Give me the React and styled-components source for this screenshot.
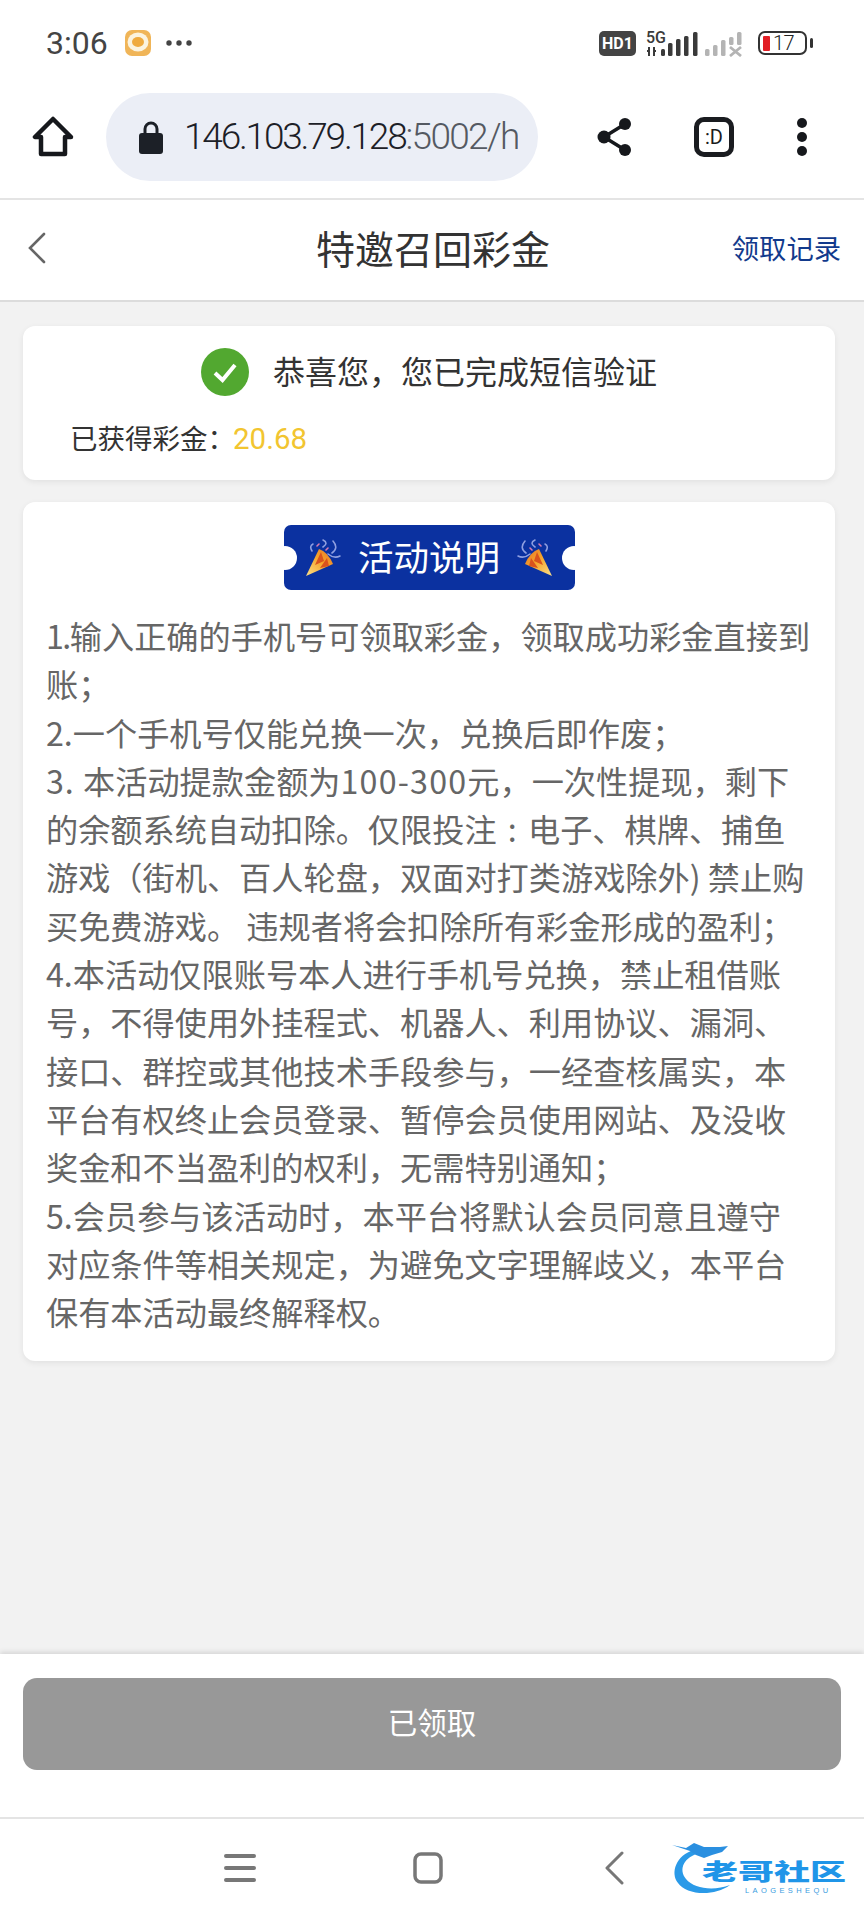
import React from "react";
import styled, { createGlobalStyle } from "styled-components";

const Global = createGlobalStyle`
  html, body { margin: 0; padding: 0; background: #fff; }
  * { box-sizing: border-box; }
`;
const CJK = `"Noto Sans CJK SC", "Noto Sans", sans-serif`;

const Page = styled.div`
  width: 864px; height: 1920px; display: flex; flex-direction: column;
  font-family: ${CJK}; background: #f2f2f2; overflow: hidden;
`;
const StatusBar = styled.div`
  height: 85px; flex: none; background: #fff; display: flex; align-items: flex-start;
  justify-content: space-between; padding: 29px 51px 0 46px;
`;
const StatusLeft = styled.div`display: flex; align-items: center; gap: 16px; height: 28px;`;
const Time = styled.span`
  font-family: Roboto, sans-serif; font-size: 32px; color: #444; line-height: 28px;
`;
const Dots = styled.svg`margin-left: -2px;`;
const StatusRight = styled.div`display: flex; align-items: center; height: 28px;`;
const HdBadge = styled.span`
  width: 37px; height: 25px; background: #444; border-radius: 5px; color: #fff;
  font: 700 16px/25px Roboto, sans-serif; text-align: center; margin-right: 10px;
`;
const Battery = styled.div`
  margin-left: 15px; width: 49px; height: 24px; border: 2.5px solid #333; border-radius: 7px;
  display: flex; align-items: center; padding-left: 3px; gap: 3px;
  font: 300 20px/1 Roboto, sans-serif; letter-spacing: -0.5px; color: #222;
`;
const BatteryFill = styled.span`width: 7px; height: 15px; background: #e21f26; border-radius: 1px;`;
const BatteryCap = styled.span`width: 3px; height: 10px; margin-left: 3px; background: #333; border-radius: 2px;`;

const BrowserBar = styled.div`
  height: 115px; flex: none; background: #fff; border-bottom: 2px solid #e4e4e4;
  display: flex; align-items: flex-start; padding: 8px 0 0 32px;
`;
const HomeSlot = styled.div`width: 42px; height: 48px; margin-top: 23px; margin-right: 32px;`;
const UrlPill = styled.div`
  width: 432px; height: 88px; border-radius: 44px; background: #ebeef6;
  display: flex; align-items: center; padding: 0 18px 0 32px; overflow: hidden;
`;
const UrlText = styled.div`
  margin-left: 20px; width: 334px; overflow: hidden; white-space: nowrap;
  font: 300 37px/44px Roboto, sans-serif; letter-spacing: -2.2px; color: #1c2027;
  & > span { color: #545962; letter-spacing: -1.700px; }
`;
const ToolIcon = styled.div`margin-top: 24px; margin-left: ${p => p.$gap}px; height: 44px; display: flex;`;
const TabCount = styled.div`
  width: 40px; height: 40px; border: 5px solid #1a1c20; border-radius: 10px;
  font: 400 20px/30px Roboto, sans-serif; text-align: center; color: #1a1c20;
`;

const Header = styled.div`
  height: 102px; flex: none; background: #fff; border-bottom: 2px solid #dcdcdc;
  position: relative; display: flex; align-items: center; justify-content: space-between; padding: 0 23px 4px 26px;
`;
const Title = styled.h1`
  margin: 0; padding-bottom: 3px; position: absolute; left: 316px; font-weight: 400; font-size: 39px; line-height: 50px; color: #333;
`;
const RecordLink = styled.a`padding-bottom: 2px; font-size: 27.3px; line-height: 40px; color: #123a8c;`;

const Main = styled.main`
  flex: 1; min-height: 0; padding: 24px 29px 0 23px; display: flex; flex-direction: column; gap: 22px;
`;
const Card = styled.section`
  background: #fff; border-radius: 12px; box-shadow: 0 2px 6px rgba(0,0,0,.07);
`;
const SuccessCard = styled(Card)`height: 154px; padding-top: 22px;`;
const SuccessRow = styled.div`height: 48px; display: flex; align-items: center; justify-content: center; gap: 24px;`;
const SuccessText = styled.span`padding-bottom: 5px; font-size: 32px; line-height: 48px; color: #333;`;
const BonusRow = styled.div`margin-top: 21px; padding-left: 47px; font-size: 27.500px; line-height: 40px; color: #333;`;
const BonusValue = styled.span`color: #f2c530; font-family: Roboto, sans-serif; font-size: 29.500px; margin-left: -2px;`;
const InfoCard = styled(Card)`height: 859px; padding: 23px 24px 0 23px;`;
const BadgeWrap = styled.div`display: flex; justify-content: center; padding-left: 1px;`;
const Badge = styled.div`
  width: 291px; height: 65px; background: #0b31a0; border-radius: 7px; position: relative;
  display: flex; align-items: center; justify-content: center; gap: 16px;
  color: #fff; font-size: 35.500px; line-height: 65px;
  &::before, &::after {
    content: ""; position: absolute; top: 21px; width: 24px; height: 24px; border-radius: 50%; background: #fff;
  }
  &::before { left: -11px; }
  &::after { right: -11px; }
`;
const BadgeLabel = styled.span`padding-bottom: 3px; line-height: 60px;`;
const Rules = styled.div`margin-top: 21px;`;
const Rule = styled.p`margin: 0; font-size: 32.2px; line-height: 48.3px; color: #666;`;
const RuleIndex = styled.span`letter-spacing: ${p => p.$spacing}px;`;
const Amount = styled.span`letter-spacing: 1.200px;`;
const Colon = styled.span`margin: 0 4px;`;

const Footer = styled.div`
  height: 163px; flex: none; background: #fff; box-shadow: 0 -2px 5px rgba(0,0,0,.12);
  padding: 24px 23px 0; position: relative;
`;
const ClaimButton = styled.button`
  width: 818px; height: 92px; border: 0; border-radius: 14px; background: #989898; color: #fff;
  font-family: ${CJK}; font-size: 29.500px; display: block; padding: 0 0 6px;
`;
const NavBar = styled.nav`
  height: 103px; flex: none; background: #fff; border-top: 2px solid #e4e4e4; position: relative;
  display: flex; align-items: center; padding: 0 0 3px 224px;
`;
const NavSlot = styled.div`display: flex; margin-right: ${p => p.$gap}px;`;
const Logo = styled.div`
  position: absolute; left: 668px; top: 22px; width: 196px; height: 64px;
`;
const LogoName = styled.span`
  position: absolute; left: 34px; top: 9px; font-weight: 900; font-size: 36px; line-height: 40px;
  color: #1f95e8; white-space: nowrap; transform: scaleY(.62);
`;
const LogoSub = styled.span`
  position: absolute; left: 77px; top: 45px; font: 400 7.500px/9px "Liberation Sans", sans-serif;
  color: #3a9ce0; letter-spacing: 3.4px; white-space: nowrap;
`;

const Hat = ({ flip, id }) => (
  <svg width="36" height="38" viewBox="0 0 36 38" style={flip ? { transform: "scaleX(-1)" } : undefined}>
    <defs>
      <linearGradient id={id} x1="0" y1="1" x2="1" y2="0">
        <stop offset="0" stopColor="#fbe08a" />
        <stop offset=".55" stopColor="#f5a42a" />
        <stop offset="1" stopColor="#e8742a" />
      </linearGradient>
    </defs>
    <path d="M0 37 L13 10 Q22 13 27 25 Z" fill={`url(#${id})`} />
    <path d="M9 26 L15 13 L18 22 Z M14 29 L21 19 L23 27 Z" fill="#d9531e" />
    <path d="M6 12 Q3 7 7 5 M17 1 Q23 4 17 8 M27 2 Q33 9 26 14 M22 15 Q28 20 34 17" fill="none" stroke="#8f9fe0" strokeWidth="1.600" strokeLinecap="round" />
    <path d="M11 7 L13 5 M20 11 L22 9" stroke="#d77ab0" strokeWidth="1.600" strokeLinecap="round" />
  </svg>
);

export default function App() {
  return (
    <Page>
      <Global />
      <StatusBar>
        <StatusLeft>
          <Time>3:06</Time>
          <svg width="28" height="28" viewBox="0 0 28 28">
            <rect x="1" y="1" width="26" height="26" rx="7" fill="#f0b558" />
            <ellipse cx="14" cy="13" rx="10.500" ry="9.500" fill="#fbf3df" />
            <ellipse cx="14" cy="13" rx="6" ry="5" fill="#efaa3e" />
          </svg>
          <Dots width="26" height="8" viewBox="0 0 26 8">
            <circle cx="3" cy="4" r="2.700" fill="#444" /><circle cx="13" cy="4" r="2.700" fill="#444" /><circle cx="23" cy="4" r="2.700" fill="#444" />
          </Dots>
        </StatusLeft>
        <StatusRight>
          <HdBadge>HD1</HdBadge>
          <svg width="97" height="28" viewBox="0 0 97 28">
            <text x="0" y="14" fontFamily="Roboto, sans-serif" fontWeight="500" fontSize="16" fill="#3a3a3a">5G</text>
            <path d="M3 18v9M8 18v9M1 22h2M8 22h2" stroke="#3a3a3a" strokeWidth="2" fill="none" />
            <rect x="15" y="20" width="4" height="7" rx="1.500" fill="#3a3a3a" />
            <rect x="22" y="14" width="4.500" height="13" rx="1.500" fill="#3a3a3a" />
            <rect x="30" y="10" width="4.500" height="17" rx="1.500" fill="#3a3a3a" />
            <rect x="38" y="7" width="4.500" height="20" rx="1.500" fill="#3a3a3a" />
            <rect x="47" y="3" width="4.500" height="24" rx="1.500" fill="#3a3a3a" />
            <rect x="59" y="20" width="4.500" height="7" rx="1.500" fill="#b4b4b4" />
            <rect x="67" y="16" width="4.500" height="11" rx="1.500" fill="#b4b4b4" />
            <rect x="75" y="11" width="4.500" height="16" rx="1.500" fill="#b4b4b4" />
            <rect x="83" y="8" width="4.500" height="8" rx="1.500" fill="#b4b4b4" />
            <rect x="91" y="3" width="4.500" height="13" rx="1.500" fill="#b4b4b4" />
            <path d="M84 18l11 9M95 18l-11 9" stroke="#b4b4b4" strokeWidth="2.800" />
          </svg>
          <Battery>
            <BatteryFill />17
          </Battery>
          <BatteryCap />
        </StatusRight>
      </StatusBar>

      <BrowserBar>
        <HomeSlot>
          <svg width="42" height="42" viewBox="0 0 42 42">
            <path d="M21 3 L3 21 L9 21 L9 38 L33 38 L33 21 L39 21 Z" fill="none" stroke="#16181c" strokeWidth="4.500" strokeLinejoin="round" />
          </svg>
        </HomeSlot>
        <UrlPill>
          <svg width="26" height="34" viewBox="0 0 26 34">
            <path d="M7 15V9a6 6 0 0 1 12 0v6" fill="none" stroke="#1c2027" strokeWidth="3" />
            <rect x="1" y="13" width="24" height="21" rx="3" fill="#1c2027" />
          </svg>
          <UrlText>146.103.79.128<span>:5002/h</span></UrlText>
        </UrlPill>
        <ToolIcon $gap={59}>
          <svg width="36" height="40" viewBox="0 0 36 40">
            <path d="M28 7 L7 20 L28 33" fill="none" stroke="#16181c" strokeWidth="3.500" />
            <circle cx="28" cy="7" r="6" fill="#16181c" /><circle cx="7" cy="20" r="6.500" fill="#16181c" /><circle cx="28" cy="33" r="6" fill="#16181c" />
          </svg>
        </ToolIcon>
        <ToolIcon $gap={61}><TabCount>:D</TabCount></ToolIcon>
        <ToolIcon $gap={62}>
          <svg width="12" height="40" viewBox="0 0 12 40">
            <circle cx="6" cy="6" r="5" fill="#16181c" /><circle cx="6" cy="20" r="5" fill="#16181c" /><circle cx="6" cy="34" r="5" fill="#16181c" />
          </svg>
        </ToolIcon>
      </BrowserBar>

      <Header>
        <svg width="22" height="32" viewBox="0 0 22 32">
          <path d="M18 2 L4 16 L18 30" fill="none" stroke="#666" strokeWidth="2.600" strokeLinecap="round" />
        </svg>
        <Title>特邀召回彩金</Title>
        <RecordLink>领取记录</RecordLink>
      </Header>

      <Main>
        <SuccessCard>
          <SuccessRow>
            <svg width="48" height="48" viewBox="0 0 48 48">
              <circle cx="24" cy="24" r="24" fill="#52a830" />
              <path d="M14 25 L21.500 32 L34 17" fill="none" stroke="#fff" strokeWidth="4" />
            </svg>
            <SuccessText>恭喜您，您已完成短信验证</SuccessText>
          </SuccessRow>
          <BonusRow>已获得彩金：<BonusValue>20.68</BonusValue></BonusRow>
        </SuccessCard>
        <InfoCard>
          <BadgeWrap>
            <Badge><Hat id="hatL" /><BadgeLabel>活动说明</BadgeLabel><Hat id="hatR" flip /></Badge>
          </BadgeWrap>
          <Rules>
            <Rule><RuleIndex $spacing={-1.5}>1.</RuleIndex>输入正确的手机号可领取彩金，领取成功彩金直接到账；</Rule>
            <Rule>2.一个手机号仅能兑换一次，兑换后即作废；</Rule>
            <Rule><RuleIndex $spacing={1}>3. </RuleIndex>本活动提款金额为<Amount>100-300</Amount>元，一次性提现，剩下的余额系统自动扣除。仅限投注<Colon> : </Colon>电子、棋牌、捕鱼游戏（街机、百人轮盘，双面对打类游戏除外) 禁止购买免费游戏。 违规者将会扣除所有彩金形成的盈利；</Rule>
            <Rule>4.本活动仅限账号本人进行手机号兑换，禁止租借账号，不得使用外挂程式、机器人、利用协议、漏洞、接口、群控或其他技术手段参与，一经查核属实，本平台有权终止会员登录、暂停会员使用网站、及没收奖金和不当盈利的权利，无需特别通知；</Rule>
            <Rule>5.会员参与该活动时，本平台将默认会员同意且遵守对应条件等相关规定，为避免文字理解歧义，本平台保有本活动最终解释权。</Rule>
          </Rules>
        </InfoCard>
      </Main>

      <Footer><ClaimButton>已领取</ClaimButton></Footer>

      <NavBar>
        <NavSlot $gap={156}>
          <svg width="32" height="32" viewBox="0 0 32 32">
            <path d="M2 4h28M2 16h28M2 28h28" stroke="#777" strokeWidth="4" strokeLinecap="round" />
          </svg>
        </NavSlot>
        <NavSlot $gap={159}>
          <svg width="32" height="34" viewBox="0 0 32 34">
            <rect x="3" y="3" width="26" height="28" rx="6" fill="none" stroke="#777" strokeWidth="3.500" />
          </svg>
        </NavSlot>
        <NavSlot $gap={0}>
          <svg width="22" height="34" viewBox="0 0 22 34">
            <path d="M19 2 L4 17 L19 32" fill="none" stroke="#777" strokeWidth="3" strokeLinecap="round" strokeLinejoin="round" />
          </svg>
        </NavSlot>
        <Logo>
          <svg width="72" height="62" viewBox="0 0 72 62">
            <path d="M26 9 C8 14 2 32 10 42 C18 54 46 56 62 44 C46 50 26 48 18 38 C10 28 16 16 32 12 Z" fill="#2a9ae8" />
            <path d="M4 4 L18 7 L26 2 L36 6 L52 6 L60 5 L54 11 L44 14 L36 17 L28 14 L22 10 Z" fill="#2a8fe0" />
          </svg>
          <LogoName>老哥社区</LogoName>
          <LogoSub>LAOGESHEQU</LogoSub>
        </Logo>
      </NavBar>
    </Page>
  );
}
